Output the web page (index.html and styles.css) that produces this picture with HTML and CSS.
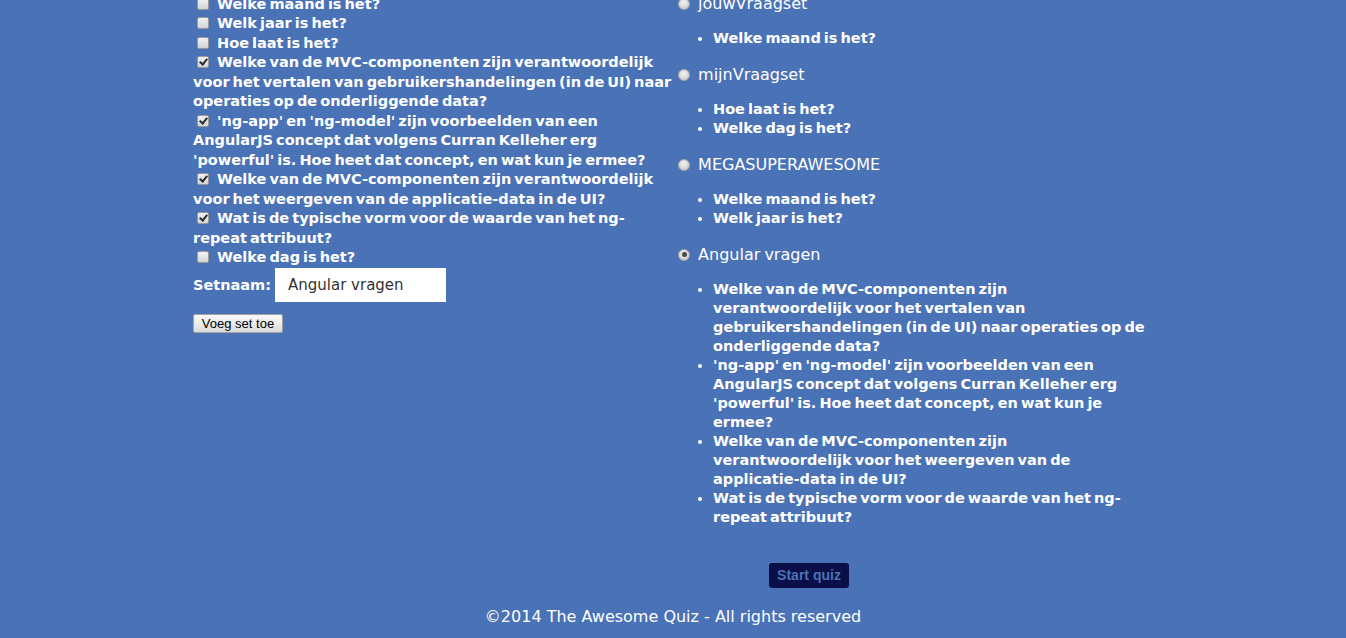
FILE: index.html
```html
<!DOCTYPE html>
<html lang="nl">
<head>
<meta charset="utf-8">
<title>The Awesome Quiz</title>
<link rel="stylesheet" href="styles.css">
</head>
<body>
<div class="page">
  <div class="columns">
    <form class="left">
      <div class="q"><input type="checkbox" class="cb"> Welke maand is het?</div>
      <div class="q"><input type="checkbox" class="cb"> Welk jaar is het?</div>
      <div class="q"><input type="checkbox" class="cb"> Hoe laat is het?</div>
      <div class="q"><input type="checkbox" class="cb" checked> Welke van de MVC-componenten zijn verantwoordelijk voor het vertalen van gebruikershandelingen (in de UI) naar operaties op de onderliggende data?</div>
      <div class="q"><input type="checkbox" class="cb" checked> 'ng-app' en 'ng-model' zijn voorbeelden van een AngularJS concept dat volgens Curran Kelleher erg 'powerful' is. Hoe heet dat concept, en wat kun je ermee?</div>
      <div class="q"><input type="checkbox" class="cb" checked> Welke van de MVC-componenten zijn verantwoordelijk voor het weergeven van de applicatie-data in de UI?</div>
      <div class="q"><input type="checkbox" class="cb" checked> Wat is de typische vorm voor de waarde van het ng-repeat attribuut?</div>
      <div class="q"><input type="checkbox" class="cb"> Welke dag is het?</div>
      <div class="setname">
        <label class="setname-label">Setnaam:</label>
        <input type="text" class="name" value="Angular vragen">
      </div>
      <button type="button" class="add">Voeg set toe</button>
    </form>
    <div class="right">
      <div class="set">
        <div class="set-title"><input type="radio" name="set" class="rb"> jouwVraagset</div>
        <ul class="qs">
          <li>Welke maand is het?</li>
        </ul>
      </div>
      <div class="set">
        <div class="set-title"><input type="radio" name="set" class="rb"> mijnVraagset</div>
        <ul class="qs">
          <li>Hoe laat is het?</li>
          <li>Welke dag is het?</li>
        </ul>
      </div>
      <div class="set">
        <div class="set-title"><input type="radio" name="set" class="rb"> MEGASUPERAWESOME</div>
        <ul class="qs">
          <li>Welke maand is het?</li>
          <li>Welk jaar is het?</li>
        </ul>
      </div>
      <div class="set">
        <div class="set-title"><input type="radio" name="set" class="rb" checked> Angular vragen</div>
        <ul class="qs">
          <li>Welke van de MVC-componenten zijn verantwoordelijk voor het vertalen van gebruikershandelingen (in de UI) naar operaties op de onderliggende data?</li>
          <li>'ng-app' en 'ng-model' zijn voorbeelden van een AngularJS concept dat volgens Curran Kelleher erg 'powerful' is. Hoe heet dat concept, en wat kun je ermee?</li>
          <li>Welke van de MVC-componenten zijn verantwoordelijk voor het weergeven van de applicatie-data in de UI?</li>
          <li>Wat is de typische vorm voor de waarde van het ng-repeat attribuut?</li>
        </ul>
      </div>
      <button type="button" class="start">Start quiz</button>
    </div>
  </div>
  <footer class="footer">©2014 The Awesome Quiz - All rights reserved</footer>
</div>
</body>
</html>
```

FILE: styles.css
```css
html, body {
  margin: 0;
  padding: 0;
}

body {
  background: #4a72b6;
  color: #ffffff;
  font-family: "DejaVu Sans", "Noto Sans", sans-serif;
}

.page {
  width: 960px;
  margin: -5.5px auto 0;
}

.columns {
  display: grid;
  grid-template-columns: 480px 480px;
  align-items: start;
}

/* left column */
.left {
  margin: 0;
}

.q {
  font-weight: bold;
  font-size: 14.5px;
  line-height: 19.5px;
  word-spacing: -2px;
}

.cb {
  appearance: none;
  -webkit-appearance: none;
  position: relative;
  box-sizing: border-box;
  width: 12px;
  height: 12px;
  margin: 0 5px 0 4px;
  vertical-align: -1px;
  border: 1px solid #9a9a9a;
  border-radius: 2px;
  background: linear-gradient(#f2f2f2, #d4d4d4);
}

.cb:checked::after {
  content: "";
  position: absolute;
  left: 3px;
  top: 0px;
  width: 3px;
  height: 6px;
  border-right: 2px solid #2a2a2a;
  border-bottom: 2px solid #2a2a2a;
  transform: rotate(40deg);
}

.setname {
  display: flex;
  align-items: center;
  gap: 4px;
}

.setname-label {
  font-weight: bold;
  font-size: 14.5px;
}

.name {
  box-sizing: border-box;
  width: 171px;
  height: 34px;
  border: none;
  padding: 0 13px;
  margin: 0;
  background: #ffffff;
  color: #333333;
  font-family: "DejaVu Sans", "Noto Sans", sans-serif;
  font-size: 15px;
  outline: none;
}

.add {
  display: block;
  box-sizing: border-box;
  margin-top: 12px;
  width: 90px;
  height: 19px;
  padding: 0;
  border: 1px solid #a3a3a3;
  border-radius: 2px;
  background: linear-gradient(#fafafa, #dcdcdc);
  color: #000000;
  font-family: "Liberation Sans", Arial, sans-serif;
  font-size: 13px;
  line-height: 17px;
}

/* right column */
.right {
  margin-top: -1px;
}

.set-title {
  font-size: 16px;
  line-height: 20px;
  word-spacing: -1px;
}

.rb {
  appearance: none;
  -webkit-appearance: none;
  position: relative;
  box-sizing: border-box;
  width: 12px;
  height: 12px;
  margin: 0 4px 0 5px;
  vertical-align: -1px;
  border-radius: 50%;
  border: 1px solid #a8a8a8;
  background: radial-gradient(circle at 45% 35%, #f4f4f4 0%, #d8d8d8 55%, #b9b9b9 100%);
}

.rb:checked::after {
  content: "";
  position: absolute;
  left: 2.5px;
  top: 2.5px;
  width: 5px;
  height: 5px;
  border-radius: 50%;
  background: #4a4a4a;
}

.qs {
  margin: 15px 7px 17px 0;
  padding-left: 40px;
  font-weight: bold;
  font-size: 14.5px;
  line-height: 19px;
  word-spacing: -2px;
}

.start {
  display: block;
  margin: 36px 0 0 96px;
  width: 80px;
  height: 25px;
  padding: 0;
  border: none;
  border-radius: 3px;
  background: #0a0f47;
  color: #4a72b6;
  font-family: "Liberation Sans Narrow", "Liberation Sans", Arial, sans-serif;
  font-stretch: condensed;
  font-weight: bold;
  font-size: 14px;
}

.footer {
  margin-top: 19px;
  padding-bottom: 12px;
  text-align: center;
  font-size: 16px;
  line-height: 19px;
}
```
